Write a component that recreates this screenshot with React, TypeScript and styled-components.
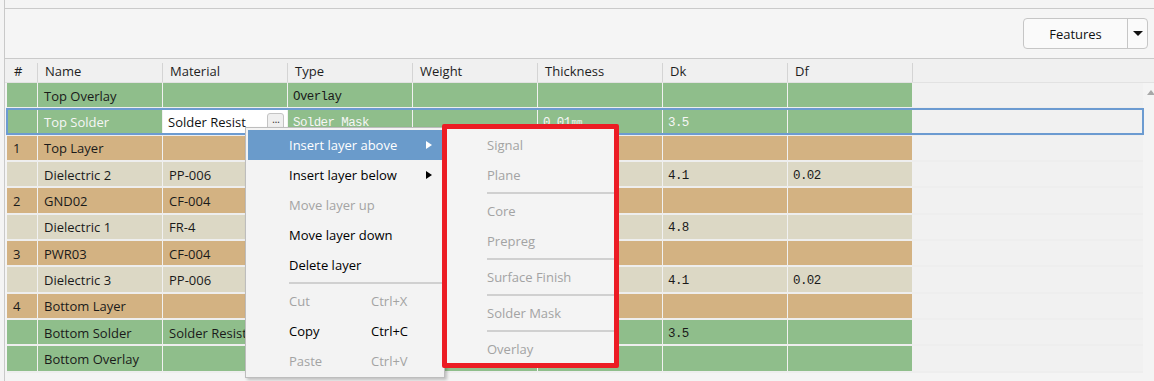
import React from "react";
import styled, { createGlobalStyle } from "styled-components";

const UI_FONT = `"Open Sans", "Noto Sans", sans-serif`;
const MONO_FONT = `"Liberation Mono", "Noto Sans CJK SC", monospace`;

const GlobalStyle = createGlobalStyle`
  html, body {
    margin: 0;
    padding: 0;
    background: #f4f4f4;
  }
  body {
    font-family: ${UI_FONT};
    font-size: 12.5px;
    color: #1a1a1a;
  }
`;

type Kind = "solder" | "copper" | "dielectric";

const rowColors: Record<Kind, string> = {
  solder: "#8fbe8b",
  copper: "#d3b282",
  dielectric: "#dcd8c5",
};

interface Layer {
  num: string;
  name: string;
  material: string;
  type: string;
  thickness: string;
  dk: string;
  df: string;
  kind: Kind;
  selected?: boolean;
}

const layers: Layer[] = [
  { num: "", name: "Top Overlay", material: "", type: "Overlay", thickness: "", dk: "", df: "", kind: "solder" },
  { num: "", name: "Top Solder", material: "Solder Resist", type: "Solder Mask", thickness: "0.01", dk: "3.5", df: "", kind: "solder", selected: true },
  { num: "1", name: "Top Layer", material: "", type: "", thickness: "", dk: "", df: "", kind: "copper" },
  { num: "", name: "Dielectric 2", material: "PP-006", type: "", thickness: "", dk: "4.1", df: "0.02", kind: "dielectric" },
  { num: "2", name: "GND02", material: "CF-004", type: "", thickness: "", dk: "", df: "", kind: "copper" },
  { num: "", name: "Dielectric 1", material: "FR-4", type: "", thickness: "", dk: "4.8", df: "", kind: "dielectric" },
  { num: "3", name: "PWR03", material: "CF-004", type: "", thickness: "", dk: "", df: "", kind: "copper" },
  { num: "", name: "Dielectric 3", material: "PP-006", type: "", thickness: "", dk: "4.1", df: "0.02", kind: "dielectric" },
  { num: "4", name: "Bottom Layer", material: "", type: "", thickness: "", dk: "", df: "", kind: "copper" },
  { num: "", name: "Bottom Solder", material: "Solder Resist", type: "", thickness: "", dk: "3.5", df: "", kind: "solder" },
  { num: "", name: "Bottom Overlay", material: "", type: "", thickness: "", dk: "", df: "", kind: "solder" },
];

const headers = ["#", "Name", "Material", "Type", "Weight", "Thickness", "Dk", "Df", ""];

const Screen = styled.div`
  position: relative;
  width: 1154px;
  height: 381px;
  overflow: hidden;
  background: #f4f4f4;
`;

const Panel = styled.div`
  margin-left: 4px;
  height: 100%;
  border-left: 1px solid #c9c9c9;
  display: flex;
  flex-direction: column;
`;

const TopGap = styled.div`
  height: 8px;
`;

const Toolbar = styled.div`
  height: 49px;
  border-top: 1px solid #cacaca;
  border-bottom: 1px solid #cacaca;
  background: #f5f5f5;
  display: flex;
  align-items: center;
  justify-content: flex-end;
  padding-right: 6px;
`;

const SplitButton = styled.div`
  display: flex;
  height: 29px;
  width: 123px;
  border: 1px solid #c6c6c6;
  border-radius: 4px;
  background: #fafafa;
`;

const SplitMain = styled.div`
  flex: 1;
  display: flex;
  align-items: center;
  justify-content: center;
  font-size: 13px;
  color: #111;
  border-right: 1px solid #c6c6c6;
`;

const SplitArrow = styled.div`
  width: 19px;
  display: flex;
  align-items: center;
  justify-content: center;

  &::before {
    content: "";
    border-left: 5px solid transparent;
    border-right: 5px solid transparent;
    border-top: 5px solid #111;
  }
`;

const HeaderRow = styled.div`
  height: 24px;
  background: #f0f0f0;
  border-bottom: 1px solid #e2e2e2;
  padding: 4px 0 0 2px;
  box-sizing: border-box;
  display: grid;
  grid-template-columns: 31px repeat(8, 125px) 1fr;
  align-items: start;
`;

const HeaderCell = styled.div<{ $last?: boolean }>`
  height: 19px;
  line-height: 17px;
  padding-left: 7px;
  border-right: ${(p) => (p.$last ? "none" : "1px solid #d4d4d4")};
  font-size: 13px;
  color: #1e1e1e;
  white-space: nowrap;
`;

const BodyArea = styled.div`
  flex: 1;
  display: flex;
  padding-left: 2px;
`;

const Rows = styled.div`
  flex: 1;
  display: flex;
  flex-direction: column;
  gap: 2px;
  background: #eeeeee;
  align-self: flex-start;
  padding-bottom: 2px;
`;

const Row = styled.div<{ $selected?: boolean }>`
  height: 24.34px;
  display: grid;
  grid-template-columns: 30px repeat(7, 124px) 1fr;
  gap: 1px;
  background: #f1f1f1;
  outline: ${(p) => (p.$selected ? "2px solid #6c9bd1" : "none")};
  outline-offset: -1px;
`;

const Cell = styled.div<{ $kind: Kind; $mono?: boolean; $light?: boolean }>`
  background: ${(p) => rowColors[p.$kind]};
  display: flex;
  align-items: center;
  padding: ${(p) => (p.$mono ? "3px 0 0 5px" : "1px 0 0 6px")};
  box-sizing: border-box;
  font-family: ${(p) => (p.$mono ? MONO_FONT : UI_FONT)};
  font-size: ${(p) => (p.$mono ? "12.5px" : "13px")};
  letter-spacing: ${(p) => (p.$mono ? "-0.6px" : "normal")};
  color: ${(p) => (p.$light ? "#f6f6f6" : "#1a1a1a")};
  white-space: nowrap;
  overflow: hidden;
`;

const Unit = styled.span`
  font-size: 9px;
  letter-spacing: 0;
  text-decoration: underline;
  margin-left: 1px;
`;

const EditCell = styled.div`
  background: #ffffff;
  display: flex;
  align-items: center;
  padding: 1px 3px 0 5px;
  box-sizing: border-box;
  font-size: 13px;
  color: #111;
  white-space: nowrap;
  overflow: hidden;
`;

const EditText = styled.span`
  flex: 1;
  overflow: hidden;
`;

const EllipsisButton = styled.div`
  width: 17px;
  height: 17px;
  border: 1px solid #c4c4c4;
  border-radius: 3px;
  background: #efefef;
  display: flex;
  align-items: center;
  justify-content: center;
  font-family: "DejaVu Sans", sans-serif;
  font-size: 11px;
  line-height: 1;
  color: #444;
  letter-spacing: -1px;
  padding-bottom: 4px;
  box-sizing: border-box;
`;

const Scrollbar = styled.div`
  width: 11px;
  display: flex;
  justify-content: flex-start;
  padding-top: 7px;
  padding-left: 4px;
  box-sizing: border-box;

  &::before {
    content: "";
    height: 0;
    border-left: 4px solid transparent;
    border-right: 4px solid transparent;
    border-bottom: 5px solid #a8a8a8;
  }
`;

const Menu = styled.div`
  position: absolute;
  left: 245px;
  top: 127px;
  width: 194px;
  padding: 2px 2px 1px;
  background: #f3f3f3;
  border: 1px solid #bdbdbd;
  box-shadow: 2px 2px 3px rgba(0, 0, 0, 0.22);
  font-size: 13px;
  z-index: 2;
`;

const MenuItem = styled.div<{ $active?: boolean; $disabled?: boolean }>`
  height: 30px;
  display: flex;
  align-items: center;
  padding-left: 41px;
  background: ${(p) => (p.$active ? "#6a9bcb" : "transparent")};
  color: ${(p) => (p.$active ? "#ffffff" : p.$disabled ? "#a3a3a3" : "#000000")};
  white-space: nowrap;
`;

const ItemLabel = styled.span<{ $fixed?: boolean }>`
  width: ${(p) => (p.$fixed ? "82px" : "auto")};
`;

const Shortcut = styled.span``;

const SubArrow = styled.span<{ $active?: boolean }>`
  margin-left: auto;
  margin-right: 10px;
  border-top: 4.5px solid transparent;
  border-bottom: 4.5px solid transparent;
  border-left: 6px solid ${(p) => (p.$active ? "#ffffff" : "#000000")};
`;

const Separator = styled.div<{ $inset: number }>`
  height: 6px;
  display: flex;
  align-items: center;
  padding-left: ${(p) => p.$inset}px;

  &::after {
    content: "";
    flex: 1;
    height: 2px;
    background: #d0d0d0;
  }
`;

const SubMenu = styled.div`
  position: absolute;
  left: 442px;
  top: 124px;
  width: 167px;
  height: 233px;
  padding-top: 1px;
  box-sizing: content-box;
  border: 5px solid #ec1c24;
  border-radius: 2px;
  background: #f4f4f4;
  overflow: hidden;
  font-size: 13px;
  z-index: 3;
`;

const SubItem = styled.div`
  height: 30px;
  display: flex;
  align-items: center;
  padding-left: 40px;
  color: #a3a3a3;
  white-space: nowrap;
`;

export default function App() {
  return (
    <>
      <GlobalStyle />
      <Screen>
        <Panel>
          <TopGap />
          <Toolbar>
            <SplitButton>
              <SplitMain>Features</SplitMain>
              <SplitArrow />
            </SplitButton>
          </Toolbar>
          <HeaderRow>
            {headers.map((h, i) => (
              <HeaderCell key={i} $last={i === headers.length - 1}>
                {h}
              </HeaderCell>
            ))}
          </HeaderRow>
          <BodyArea>
            <Rows>
              {layers.map((l, i) => (
                <Row key={i} $selected={l.selected}>
                  <Cell $kind={l.kind}>{l.num}</Cell>
                  <Cell $kind={l.kind} $light={l.selected}>{l.name}</Cell>
                  {l.selected ? (
                    <EditCell>
                      <EditText>{l.material}</EditText>
                      <EllipsisButton>...</EllipsisButton>
                    </EditCell>
                  ) : (
                    <Cell $kind={l.kind}>{l.material}</Cell>
                  )}
                  <Cell $kind={l.kind} $mono $light={l.selected}>{l.type}</Cell>
                  <Cell $kind={l.kind} $mono $light={l.selected} />
                  <Cell $kind={l.kind} $mono $light={l.selected}>
                    {l.thickness}
                    {l.thickness && <Unit>mm</Unit>}
                  </Cell>
                  <Cell $kind={l.kind} $mono $light={l.selected}>{l.dk}</Cell>
                  <Cell $kind={l.kind} $mono $light={l.selected}>{l.df}</Cell>
                </Row>
              ))}
            </Rows>
            <Scrollbar />
          </BodyArea>
        </Panel>

        <Menu>
          <MenuItem $active>
            <ItemLabel>Insert layer above</ItemLabel>
            <SubArrow $active />
          </MenuItem>
          <MenuItem>
            <ItemLabel>Insert layer below</ItemLabel>
            <SubArrow />
          </MenuItem>
          <MenuItem $disabled>Move layer up</MenuItem>
          <MenuItem>Move layer down</MenuItem>
          <MenuItem>Delete layer</MenuItem>
          <Separator $inset={41} />
          <MenuItem $disabled>
            <ItemLabel $fixed>Cut</ItemLabel>
            <Shortcut>Ctrl+X</Shortcut>
          </MenuItem>
          <MenuItem>
            <ItemLabel $fixed>Copy</ItemLabel>
            <Shortcut>Ctrl+C</Shortcut>
          </MenuItem>
          <MenuItem $disabled>
            <ItemLabel $fixed>Paste</ItemLabel>
            <Shortcut>Ctrl+V</Shortcut>
          </MenuItem>
        </Menu>

        <SubMenu>
          <SubItem>Signal</SubItem>
          <SubItem>Plane</SubItem>
          <Separator $inset={40} />
          <SubItem>Core</SubItem>
          <SubItem>Prepreg</SubItem>
          <Separator $inset={40} />
          <SubItem>Surface Finish</SubItem>
          <Separator $inset={40} />
          <SubItem>Solder Mask</SubItem>
          <Separator $inset={40} />
          <SubItem>Overlay</SubItem>
        </SubMenu>
      </Screen>
    </>
  );
}
